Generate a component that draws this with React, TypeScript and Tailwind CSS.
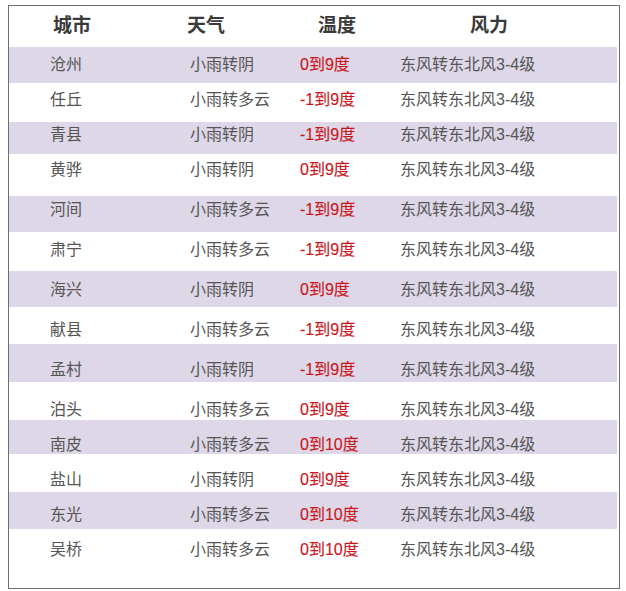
const rows = [
  { city: "沧州", weather: "小雨转阴", temp: "0到9度", h: "h-[36px] pt-[7px]", band: true },
  { city: "任丘", weather: "小雨转多云", temp: "-1到9度", h: "h-[39px] pt-[6px]", band: false },
  { city: "青县", weather: "小雨转阴", temp: "-1到9度", h: "h-[32px] pt-[2px]", band: true },
  { city: "黄骅", weather: "小雨转阴", temp: "0到9度", h: "h-[42px] pt-[5px]", band: false },
  { city: "河间", weather: "小雨转多云", temp: "-1到9度", h: "h-[36px] pt-[3px]", band: true },
  { city: "肃宁", weather: "小雨转多云", temp: "-1到9度", h: "h-[39px] pt-[7px]", band: false },
  { city: "海兴", weather: "小雨转阴", temp: "0到9度", h: "h-[36px] pt-[8px]", band: true },
  { city: "献县", weather: "小雨转多云", temp: "-1到9度", h: "h-[37px] pt-[12px]", band: false },
  { city: "孟村", weather: "小雨转阴", temp: "-1到9度", h: "h-[38px] pt-[15px]", band: true },
  { city: "泊头", weather: "小雨转多云", temp: "0到9度", h: "h-[38px] pt-[17px]", band: false },
  { city: "南皮", weather: "小雨转多云", temp: "0到10度", h: "h-[34px] pt-[14px]", band: true },
  { city: "盐山", weather: "小雨转阴", temp: "0到9度", h: "h-[38px] pt-[15px]", band: false },
  { city: "东光", weather: "小雨转多云", temp: "0到10度", h: "h-[37px] pt-[12px]", band: true },
  { city: "吴桥", weather: "小雨转多云", temp: "0到10度", h: "h-[38px] pt-[10px]", band: false },
];

const cols = "grid grid-cols-[140px_110px_100px_1fr] pl-[41px]";

export default function App() {
  return (
    <div className="min-h-screen bg-white pl-[8px] pt-[5px] font-['Liberation_Sans','Noto_Sans_CJK_SC',sans-serif]">
      <div className="flex h-[584px] w-[612px] flex-col border border-[#6e6e6e] bg-white pr-[2px]">
        <div className={`${cols} h-[41px] items-center text-[19px] font-semibold text-[#3a3a3a]`}>
          <span className="pl-[3px]">城市</span>
          <span className="-ml-[3px]">天气</span>
          <span className="pl-[18px]">温度</span>
          <span className="pl-[70px]">风力</span>
        </div>
        {rows.map((r) => (
          <div
            key={r.city}
            className={`${cols} ${r.h} text-[16px] leading-[22px] text-[#555] ${r.band ? "bg-[#ddd7e7]" : "bg-white"}`}
          >
            <span>{r.city}</span>
            <span>{r.weather}</span>
            <span className="text-[#cc161d] [-webkit-text-stroke:0.15px_#cc161d]">{r.temp}</span>
            <span>东风转东北风3-4级</span>
          </div>
        ))}
      </div>
    </div>
  );
}
